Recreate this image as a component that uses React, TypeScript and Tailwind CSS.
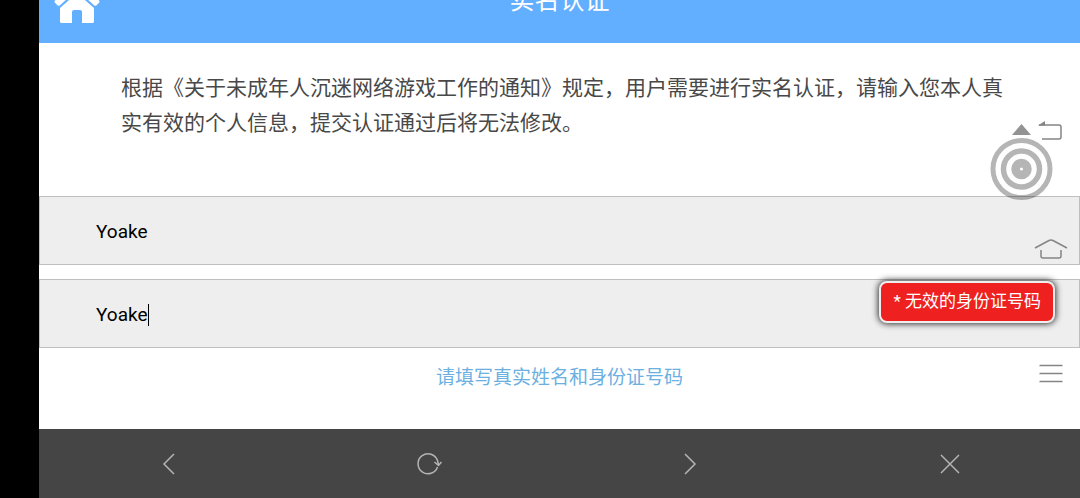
import React from 'react';

const HomeIcon = () => (
  <svg width="46" height="44" viewBox="0 0 46 44" fill="#fff" aria-hidden="true">
    <path d="M34 2h6a1 1 0 0 1 1 1v14l-8-7V3a1 1 0 0 1 1-1z" />
    <path d="M20.5 3.6a4 4 0 0 1 5 0L45 21.6a1.6 1.6 0 0 1 0 2.2l-2.4 2.5a2 2 0 0 1-2.6 0L24.2 11.8a2 2 0 0 0-2.4 0L6 26.3a2 2 0 0 1-2.6 0L1 23.8a1.6 1.6 0 0 1 0-2.2z" />
    <path d="M23 14 40 29v13.500a1.500 1.500 0 0 1-1.500 1.500H28V33a2 2 0 0 0-2-2h-6a2 2 0 0 0-2 2v11H7.500A1.500 1.500 0 0 1 6 42.500V29z" />
  </svg>
);

const BackIcon = () => (
  <svg width="24" height="20" viewBox="0 0 24 20" fill="none" aria-hidden="true">
    <path d="M1 4h20a2 2 0 0 1 2 2v10a2 2 0 0 1-2 2H4" stroke="#858585" strokeWidth="1.5" />
    <path d="M0 4.500 7 0v4.500z" fill="#858585" />
  </svg>
);

const TargetIcon = () => (
  <svg width="64" height="80" viewBox="0 0 64 80" fill="none" aria-hidden="true">
    <path d="M31.500 4 41 15H22z" fill="#939393" />
    <g stroke="#000" strokeOpacity="0.29">
      <circle cx="31.5" cy="49" r="28.5" strokeWidth="5" />
      <circle cx="31.5" cy="49" r="18" strokeWidth="5.5" />
      <circle cx="31.5" cy="49" r="5.5" strokeWidth="9.5" />
    </g>
    <circle cx="31.5" cy="49" r="1.5" fill="#fff" />
  </svg>
);

const HouseOutline = () => (
  <svg width="34" height="24" viewBox="0 0 34 24" fill="none" stroke="#858585" strokeWidth="1.5" aria-hidden="true">
    <path d="M1 11 15 3.500q2-1 4 0L33 11" />
    <path d="M7 13v6a2 2 0 0 0 2 2h16a2 2 0 0 0 2-2v-6" />
  </svg>
);

const MenuIcon = () => (
  <svg width="24" height="20" viewBox="0 0 24 20" stroke="#858585" strokeWidth="1.5" aria-hidden="true">
    <path d="M0.500 1.500h23M0.500 9.500h23M0.500 17.500h23" />
  </svg>
);

const navItems = [
  { label: '后退', path: 'M19 4 9 14l10 10' },
  {
    label: '刷新',
    path: 'M22.500 17A10 10 0 1 1 22.500 10.500L23.500 14.500M19.500 12l4 3.500 3-3.500',
  },
  { label: '前进', path: 'M9 4l10 10L9 24' },
  { label: '关闭', path: 'M5 5l18 18M23 5 5 23' },
];

const inputClass =
  'block h-[69px] w-full border border-[#bfbfbf] bg-[#eee] px-14 pt-0.5 font-[Roboto,sans-serif] text-[19px] font-normal text-black outline-none';

export default function App() {
  return (
    <div className="relative flex min-h-screen overflow-hidden bg-black font-['Noto_Sans_CJK_SC',sans-serif] font-normal">
      <div className="ml-[39px] flex min-w-0 flex-1 flex-col bg-white">
        {/* Cabecera, con la página desplazada hacia abajo */}
        <header className="relative -mt-[41px] flex h-[84px] items-center justify-center bg-[#62aeff]">
          <a href="#home" aria-label="首页" className="absolute left-[15px]">
            <HomeIcon />
          </a>
          <h1 className="pb-1 text-[25px] text-white">实名认证</h1>
        </header>

        <main className="flex-1">
          <p className="pt-[26px] pr-16 pl-[82px] text-[21px] leading-[35px] text-[#484848]">
            根据《关于未成年人沉迷网络游戏工作的通知》规定，用户需要进行实名认证，请输入您本人真实有效的个人信息，提交认证通过后将无法修改。
          </p>

          <form className="mt-[57px] flex flex-col gap-[14px]">
            <input aria-label="姓名" defaultValue="Yoake" className={inputClass} />
            <div className="relative">
              <input aria-label="身份证号码" defaultValue="Yoake" className={inputClass} />
              <span className="absolute top-[25px] left-[109px] h-[22px] w-px bg-black" />
              <div
                role="alert"
                className="absolute top-0.5 right-[25px] rounded-lg border-2 border-[#eee] bg-[#ee2020] px-3 pt-[5px] pb-[7px] font-[Roboto,'Noto_Sans_CJK_SC',sans-serif] text-[17px] leading-[26px] text-white shadow-[0_0_6px_1px_#333]"
              >
                * 无效的身份证号码
              </div>
            </div>
          </form>

          <p className="mt-[14px] mb-8 text-center text-[19px] leading-7 text-[#6cb0e2]">请填写真实姓名和身份证号码</p>
        </main>

        <nav className="grid h-[69px] grid-cols-4 bg-[#454545]">
          {navItems.map((item) => (
            <button key={item.label} aria-label={item.label} className="flex items-center justify-center">
              <svg width="28" height="28" viewBox="0 0 28 28" fill="none" stroke="#b4b4b4" strokeWidth="1.5">
                <path d={item.path} />
              </svg>
            </button>
          ))}
        </nav>
      </div>

      {/* Botones flotantes del sistema */}
      <button aria-label="返回" className="absolute top-[121px] right-[18px]">
        <BackIcon />
      </button>
      <button aria-label="悬浮球" className="absolute top-[120px] right-[26px]">
        <TargetIcon />
      </button>
      <button aria-label="主页" className="absolute top-[237px] right-3">
        <HouseOutline />
      </button>
      <button aria-label="菜单" className="absolute top-[364px] right-[17px]">
        <MenuIcon />
      </button>
    </div>
  );
}
